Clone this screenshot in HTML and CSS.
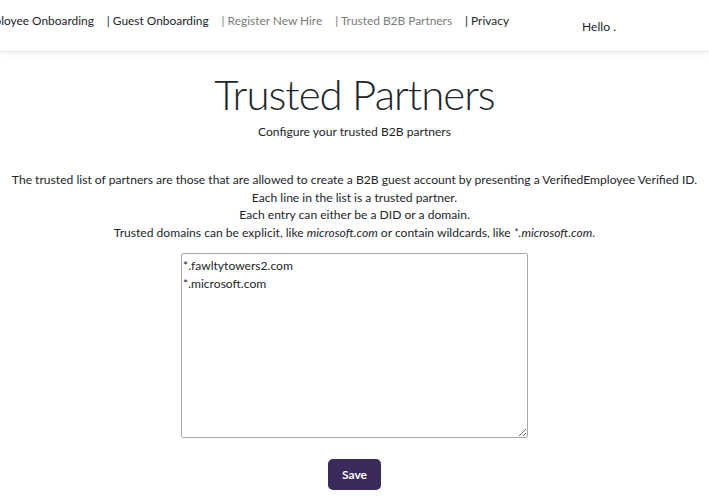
FILE: index.html
```html
<!DOCTYPE html>
<html>
<head>
<meta charset="utf-8">
<link rel="stylesheet" href="styles.css">
</head>
<body>
<header class="topbar">
  <nav class="nav">
    <span class="nav-item first">Employee Onboarding</span>
    <span class="nav-item">| Guest Onboarding</span>
    <span class="nav-item muted">| Register New Hire</span>
    <span class="nav-item muted">| Trusted B2B Partners</span>
    <span class="nav-item">| Privacy</span>
  </nav>
  <div class="hello">Hello .</div>
</header>
<main class="content">
  <h1 class="title">Trusted Partners</h1>
  <p class="subtitle">Configure your trusted B2B partners</p>
  <div class="info">
    <div>The trusted list of partners are those that are allowed to create a B2B guest account by presenting a VerifiedEmployee Verified ID.</div>
    <div>Each line in the list is a trusted partner.</div>
    <div>Each entry can either be a DID or a domain.</div>
    <div>Trusted domains can be explicit, like <em>microsoft.com</em> or contain wildcards, like <em>*.microsoft.com</em>.</div>
  </div>
  <textarea class="partners">*.fawltytowers2.com
*.microsoft.com</textarea>
  <button class="save">Save</button>
</main>
</body>
</html>
```
FILE: styles.css
```css
* { box-sizing: border-box; }
html, body { margin: 0; padding: 0; background: #fff; }
body {
  font-family: Lato, "Open Sans", sans-serif;
  color: #212529;
  font-size: 12.1px;
  overflow: hidden;
}
.topbar {
  height: 52px;
  display: flex;
  align-items: flex-start;
  border-bottom: 1px solid #e8e8e8;
  box-shadow: 0 2px 6px rgba(0,0,0,0.06);
  overflow: hidden;
}
.nav {
  display: flex;
  gap: 13px;
  padding-top: 13px;
  margin-left: -22px;
  font-size: 11.9px;
  white-space: nowrap;
}
.nav-item { color: #212529; }
.nav-item.muted { color: #7a7a7a; }
.hello {
  margin-left: auto;
  margin-right: 93px;
  padding-top: 19px;
  font-size: 12.1px;
  color: #212529;
}
.content {
  display: flex;
  flex-direction: column;
  align-items: center;
  text-align: center;
}
.title {
  margin: 14px 0 0;
  font-weight: 300;
  font-size: 42px;
  letter-spacing: -1px;
  line-height: 56px;
  color: #212529;
}
.subtitle {
  margin: 2px 0 0;
  font-size: 12.1px;
}
.info {
  margin-top: 32px;
  line-height: 17.5px;
  font-size: 12.1px;
}
.partners {
  margin-top: 12px;
  width: 347px;
  height: 185px;
  border: 1px solid #a8a8a8;
  border-radius: 2px;
  padding: 3px 1px;
  font-family: Lato, "Open Sans", sans-serif;
  font-size: 12.1px;
  line-height: 18px;
  color: #212529;
  resize: vertical;
}
.save {
  margin-top: 21px;
  width: 53px;
  height: 31px;
  border: none;
  border-radius: 5px;
  background: #3b2a5c;
  color: #fff;
  font-family: Lato, sans-serif;
  font-weight: 700;
  font-size: 12px;
}
```
